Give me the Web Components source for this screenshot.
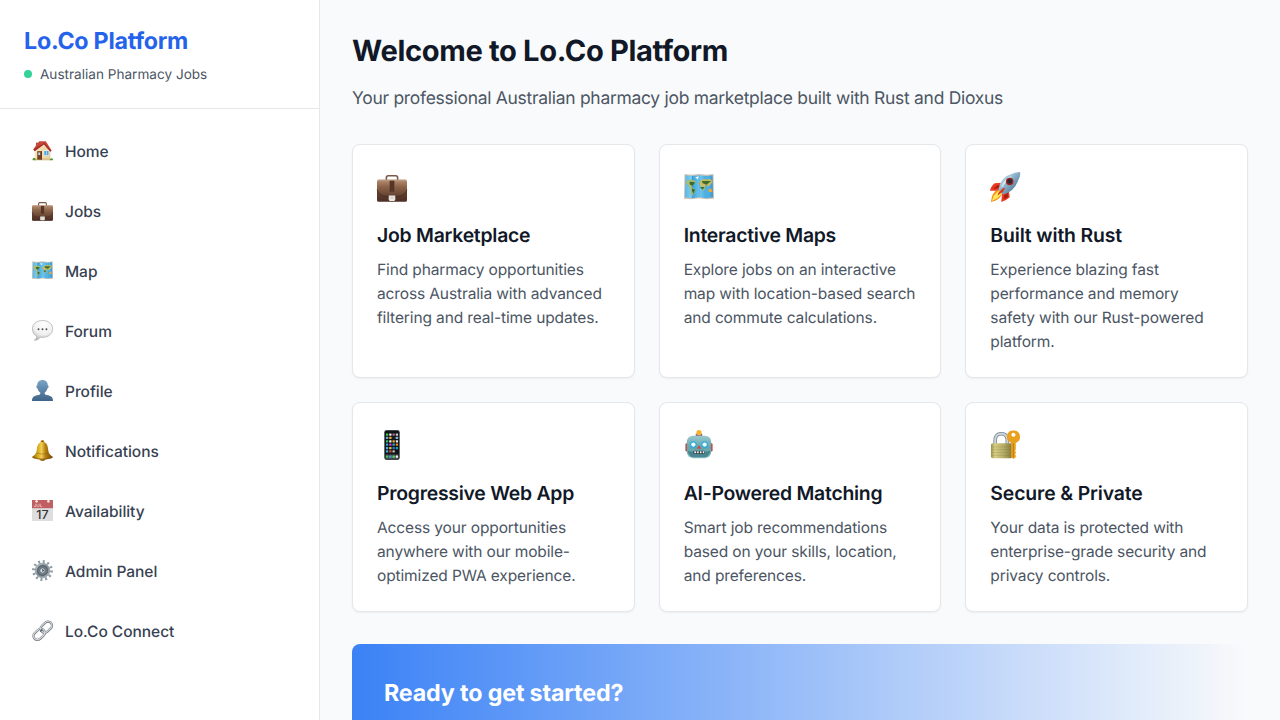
<!DOCTYPE html>
<html lang="en">
<head>
<meta charset="utf-8">
<title>Lo.Co Platform</title>
<style>
html,body{margin:0;height:100%;overflow:hidden;background:#f9fafb;font-family:Inter,"Liberation Sans",sans-serif;color:#111827;text-rendering:geometricPrecision}
</style>
</head>
<body>
<loco-app></loco-app>
<script>
const ICONS = {
home:`<defs><linearGradient id="w" x2="1"><stop stop-color="#f8e7bd"/><stop offset="1" stop-color="#e5cf9b"/></linearGradient></defs>
<path fill="#a9563f" d="M6 4h4v7H6z"/><path fill="url(#w)" d="M4 16 14 5l14 12v13H4z"/><path fill="#d8c08c" d="M4 28h24v3H4z"/>
<path fill="#c8473b" d="m2 14 9-12h10l9 14-2 2L18 7 4 17z"/><path fill="#8e1c18" d="m2 14 2 3L18 7l10 11 1-2L19 4z" opacity=".55"/>
<path fill="#7a3d20" d="M8 17h7v13H8z"/><path fill="#b8dcf0" d="M9.500 19h3v4h-3z"/><path fill="#54301d" d="M14 17h1v13h-1z"/>
<path fill="#fff" d="M18 16h8v8h-8z"/><path fill="#4fa3dc" d="M18.700 16.700h6.600v6.600h-6.600z"/><path fill="#d8efff" d="M21.600 17h1v6h-1z"/>
<path fill="#54972b" d="M1 31c-1-3 2-5 4-3l1 3zM27 31c0-3 4-5 5-1v1z"/>`,
briefcase:`<defs><linearGradient id="b" y2="1" x2="0"><stop stop-color="#b78f73"/><stop offset=".35" stop-color="#8a6148"/><stop offset="1" stop-color="#4b2e24"/></linearGradient></defs>
<path fill="none" stroke="#7a5949" stroke-width="1.700" d="M10 9V6q0-2 2-2h8q2 0 2 2v3"/>
<rect y="8" width="32" height="23.500" rx="2" fill="url(#b)"/><path fill="#4d2f24" opacity=".5" d="M0 20q3 7 10 7h12q7 0 10-7v10q0 2-2 2H2q-2 0-2-2z"/>
<path d="M0 19q3 7 10 7h12q7 0 10-7" fill="none" stroke="#3f251c" stroke-width=".8"/><path fill="#553526" d="M13.500 9h5v12h-5z"/><path fill="#cbb09a" d="M1 8.500h30v.8H1z" opacity=".6"/>
<path fill="#e9e6e1" d="M12.500 25h7v4.500l-1 1.500h-5l-1-1.500z"/><path fill="#c9c6c0" d="M14 27h4v1h-4z"/>`,
map:`<defs><linearGradient id="m" x2="1"><stop stop-color="#5cb5e5"/><stop offset=".24" stop-color="#7bcff3"/><stop offset=".25" stop-color="#3d9fd7"/><stop offset=".49" stop-color="#66c0ec"/><stop offset=".5" stop-color="#76ccf2"/><stop offset=".74" stop-color="#4aabdd"/><stop offset=".75" stop-color="#5cbce9"/><stop offset="1" stop-color="#3899d3"/></linearGradient></defs>
<path fill="#d0c2b4" d="m.500 2 7.500 1 8-1 8 1 7.500-1L32 28.500l-8 .5-8-1-8 1-8-.500z"/><path fill="url(#m)" d="m1.500 3.500 6.500.7 8-.8 8 .8 6.500-.7.500 23.500-7 1-8-1-8 1-7-1z"/>
<path fill="#a9bf72" d="m3 9 4-1 4 1 2 2-3 2-2 3 3 2 1 2-2 3-1 3-2-3v-4l-2-4-3-3z"/><path fill="#3d6a2b" d="m6 10.500 6 .500-3 4-3-2zm2.500 7 3.500 1.500-2 4-1.500-3z"/>
<path fill="#c7bd62" d="m15.500 12 3.500-4 9-.5 2.500 2.500-3 4.500-2.500 1-2-2-1 5-2 1.500-1.500-5-2-1z"/><path fill="#426b2c" d="m19 9.500 10 0-5 4-4-1.500zm-2 6.500 5 0-2 3z"/><path fill="#e7a83b" d="m26 18.500 3-1 1.500 3.500-4 .7z"/><path fill="#e5f6f8" d="m12 5.500 4-1-1.500 3.500z"/><path fill="#1b6e9b" opacity=".22" d="M8 4.200 9 4v23l-1 .5zm8-.8h1v23h-1zm8 .8 1-.2v23l-1 .5z"/>`,
rocket:`<defs><linearGradient id="r" x1="0" y1="0" x2="1" y2="1"><stop stop-color="#dff2fb"/><stop offset=".45" stop-color="#8db3ca"/><stop offset="1" stop-color="#2e5878"/></linearGradient></defs>
<path fill="#e9381f" d="M13 11.500 5 12q-4 3-5 8l10 0zM20 19l1 8q-3 3-9 5l1-10z"/><path fill="#a91c12" d="M12 14 8 14l-5 4 6-1zM19 22v5l-4 2v-4z"/>
<path fill="#f68a16" d="M9 19Q2 21 1 32q10-2 12-9z"/><path fill="#ffe85b" d="m9 20-5 5-2 6 6-3 5-5z"/>
<path fill="url(#r)" d="M9 19Q11 5 23 2q5-2 9-2 1 4-2 9-4 12-16 15z"/><path fill="#f5fdff" opacity=".7" d="M12 16Q15 7 24 3.500q-6 5-11 13z"/>
<circle cx="21" cy="10" r="4" fill="#9e2523"/><circle cx="21" cy="10" r="2.600" fill="#30292f"/><path fill="#d93920" d="M14 17 9 22l-1 3 6-4 2-4z"/>`,
bubble:`<defs><radialGradient id="c" cx=".55" cy=".2" r=".8"><stop stop-color="#fff"/><stop offset=".65" stop-color="#efefef"/><stop offset="1" stop-color="#b8b8b8"/></radialGradient></defs>
<path fill="url(#c)" stroke="#a8a8a8" stroke-width="1" d="M16 .7C7 .7.600 6 .600 13.500c0 6 3.400 9.200 6.400 11.100.2 3-1.500 5-3.500 6.200 4 .4 7-1.600 8.800-4.600l3.700.3c9 0 15.500-5.500 15.500-13S25 .700 16 .700z"/><circle cx="10" cy="14" r="1.450" fill="#4a4a4a"/><circle cx="16" cy="14" r="1.450" fill="#4a4a4a"/><circle cx="22" cy="14" r="1.450" fill="#4a4a4a"/>`,
person:`<defs><linearGradient id="p" x2="0" y2="1"><stop stop-color="#7ba4c6"/><stop offset="1" stop-color="#3e6488"/></linearGradient></defs><path fill="url(#p)" d="M16 0c-5 0-8 3.200-8 8-2 0-1.500 5 .7 5 .6 3 2 5.200 4.100 6.500-.1 2.500-1.200 3-3.300 3.500C3 24.300 0 26 0 32h32c0-6-3-7.700-9.500-9-2.100-.5-3.200-1-3.300-3.500 2.100-1.300 3.500-3.500 4.100-6.500 2.200 0 2.700-5 .7-5 0-4.800-3-8-8-8z"/>`,
bell:`<defs><linearGradient id="l" x2="1"><stop stop-color="#94650a"/><stop offset=".3" stop-color="#dcae26"/><stop offset=".45" stop-color="#efcf50"/><stop offset=".65" stop-color="#b57c0f"/><stop offset="1" stop-color="#6f4707"/></linearGradient></defs><circle cx="16" cy="3" r="3" fill="#bc8517"/><circle cx="16" cy="3" r="1.300" fill="#714809"/><ellipse cx="16" cy="28.500" rx="4.500" ry="3.200" fill="#7b4b05"/><path fill="url(#l)" d="M16 3C9 3 8 9 7.300 15 6.700 21 4.500 23 0 26c2 5 30 5 32 0-4.500-3-6.700-5-7.300-11C24 9 23 3 16 3z"/><path fill="#815204" opacity=".55" d="M2 25q14 6 28 0l2 1q-4 4-16 4T0 26z"/><path d="M7 20q9 3 18 0" fill="none" stroke="#8b5d07" opacity=".7"/>`,
calendar:`<path fill="#dedede" d="M0 0h32v32H0z"/><path fill="#bf5f61" d="M0 0h32v12.500H0z"/><circle cx="7" cy="2" r="2" fill="#f4e7e6"/><circle cx="25" cy="2" r="2" fill="#f4e7e6"/><text x="2.500" y="11" font-family="Inter,sans-serif" font-size="7" fill="#f3d9d9">JUL</text><text x="16" y="29" text-anchor="middle" font-family="Inter,sans-serif" font-size="19" letter-spacing="0" font-weight="500" fill="#353535">17</text>`,
gear:`<defs><linearGradient id="g" x2="1" y2="1"><stop stop-color="#c4cdd2"/><stop offset=".5" stop-color="#7b8790"/><stop offset="1" stop-color="#aab4ba"/></linearGradient></defs><circle cx="16" cy="16" r="13.700" fill="none" stroke="#8f9ba3" stroke-width="4.400" stroke-dasharray="3 4.173"/><circle cx="16" cy="16" r="11" fill="url(#g)" stroke="#98a3aa" stroke-width="1.500"/><circle cx="16" cy="16" r="7.500" fill="#75818a" stroke="#56616a" stroke-width="1.700"/><circle cx="16" cy="16" r="4" fill="#d8e0e3" stroke="#46515a" stroke-width="1"/><path fill="#4d5961" d="m15 13.500 4 2-3 3z"/>`,
link:`<g fill="none" stroke="#757d84" stroke-width="3.600"><rect x="12" y="5" width="19" height="12" rx="6" transform="rotate(-43 21.500 10.500)"/><rect x="1" y="16" width="19" height="12" rx="6" transform="rotate(-43 10.500 21.500)"/></g><g fill="none" stroke="#d9dee2" stroke-width="1.700"><rect x="12" y="4.700" width="19" height="12" rx="6" transform="rotate(-43 21.500 10.500)"/><rect x="1" y="15.700" width="19" height="12" rx="6" transform="rotate(-43 10.500 21.500)"/></g><path d="m12.500 17.500 3-3" stroke="#535b61" stroke-width="2"/>`,
phone:`<rect x="7.500" y="0" width="17" height="32" rx="2.600" fill="#777d80"/><rect x="8.300" y=".5" width="15.400" height="31" rx="2" fill="#111416"/>
${[['#45c94f','#eee','#b467a0','#c7cbc6'],['#68a9da','#e9a633','#222','#83b6df'],['#34bd62','#eee','#e5ad30','#e7e7e7'],['#28a6d5','#d637c5','#3ba4d8','#e88c24'],['#57a8e8','#dfc440','#2f71d0','#26a3ad'],['#43b5db','#d94a3a','#b8bec0','#111416']].map((r,j)=>r.map((c,i)=>`<rect x="${9.500+i*3.500}" y="${3.600+j*3.600}" width="2.500" height="2.500" rx=".4" fill="${c}"/>`).join('')).join('')}
<path fill="#43494d" d="M9 26h14v5H9z"/>${['#45c94f','#48a5e4','#62d265','#eee'].map((c,i)=>`<rect x="${9.500+i*3.500}" y="27.200" width="2.500" height="2.500" rx=".4" fill="${c}"/>`).join('')}`,
robot:`<defs><linearGradient id="o" y2="1" x2="0"><stop stop-color="#9ac8ce"/><stop offset=".55" stop-color="#5fa5af"/><stop offset="1" stop-color="#8cc0c6"/></linearGradient></defs><path fill="#7f6395" d="M12.500 4h7v4h-7z"/><circle cx="16" cy="2.800" r="2.800" fill="#f5b32c"/><rect x="1.500" y="14" width="4" height="9" rx="1.500" fill="#c8403a"/><rect x="26.500" y="14" width="4" height="9" rx="1.500" fill="#c8403a"/><rect x="3" y="6" width="26" height="24" rx="6.500" fill="url(#o)"/><path fill="#38757f" opacity=".75" d="M4 22q12 3 24 0-1 7-7 7H11q-6 0-7-7z"/><circle cx="10" cy="15.500" r="3.600" fill="#34a8d6"/><circle cx="22" cy="15.500" r="3.600" fill="#34a8d6"/><circle cx="10" cy="15.500" r="2.300" fill="#e9fcff"/><circle cx="22" cy="15.500" r="2.300" fill="#e9fcff"/><path fill="#d24b40" d="m16 16 2.500 4h-5z"/><rect x="10" y="22" width="12" height="3.500" rx="1" fill="#2b4146"/><path fill="#eee" d="M11 22.700h2v2h-2zm3 0h1.700v2H14zm3 0h1.700v2H17zm3 0h1.500v2H20z"/>`,
lock:`<defs><linearGradient id="k" x2="1"><stop stop-color="#99914b"/><stop offset=".18" stop-color="#d8ce87"/><stop offset=".55" stop-color="#b8b06a"/><stop offset="1" stop-color="#827a3d"/></linearGradient></defs><path fill="none" stroke="#79838d" stroke-width="3.800" d="M5.500 16V11q0-7 6.500-7t6.500 7v5"/><path fill="none" stroke="#ccd5dd" stroke-width="2.200" d="M5.500 16V11q0-7 6.500-7t6.500 7v5"/><rect x="1" y="14" width="23" height="16" rx="2" fill="url(#k)"/><path stroke="#756d30" opacity=".22" d="M2 18h21M2 21h21M2 24h21M2 27h21"/><path fill="#e9a01f" d="M25 .500a6.800 6.800 0 0 0-2.500 13.200V29l2.500 2 2.500-2v-2l-1-1 1-1v-2l-1-1 1-1v-7.300A6.800 6.800 0 0 0 25 .500z"/><circle cx="25" cy="5" r="2.200" fill="#fffdf6"/><path fill="#bd7a0c" d="M24.300 14h1v15h-1z"/>`
};
const make=(tag,css,html)=>customElements.define(tag,class extends HTMLElement{constructor(){super();this.attachShadow({mode:'open'}).innerHTML=`<style>*{box-sizing:border-box;margin:0}${css}</style>${typeof html==='function'?html(this):html}`}});

make('emoji-icon',':host{display:block;width:var(--icon,21px);height:var(--icon,21px);flex:none}svg{display:block;width:100%;height:100%;overflow:visible}',el=>`<svg viewBox="0 0 32 32" aria-hidden="true">${ICONS[el.getAttribute('name')]}</svg>`);
make('nav-item',':host{display:flex;align-items:center;gap:12px;height:52px;padding:0 16px;font-size:15.520px;letter-spacing:-.04px;font-weight:500;line-height:24px;color:#374151;white-space:nowrap}emoji-icon{margin-bottom:1px}span{padding-top:2px}',el=>`<emoji-icon name="${el.getAttribute('icon')}"></emoji-icon><span><slot></slot></span>`);
make('side-bar',`:host{display:block;background:#fff;border-right:1px solid #e5e7eb}header{padding:24px;border-bottom:1px solid #e5e7eb}h1{font-size:23.280px;letter-spacing:-.26px;line-height:30px;padding-top:2px;font-weight:700;color:#2563eb;white-space:nowrap}.s{display:flex;align-items:center;gap:8px;margin-top:8px;height:20px;font-size:13.580px;line-height:20px;color:#4b5563;white-space:nowrap}.s span{padding-top:2px}i{width:8px;height:8px;border-radius:50%;background:#34d399}nav{display:flex;flex-direction:column;gap:8px;padding:16px}`,
`<header><h1><span>Lo.Co Platform</span></h1><div class="s"><i></i><span>Australian Pharmacy Jobs</span></div></header><nav><slot></slot></nav>`);
make('feature-card',`:host{display:block;background:#fff;border:1px solid #e5e7eb;border-radius:8px;padding:24px;box-shadow:0 1px 2px rgba(0,0,0,.05);box-sizing:border-box}.i{height:36px;padding-top:3px;--icon:30px;margin-bottom:16px}h3{font-size:19.400px;letter-spacing:var(--tracking,-.25px);line-height:28px;font-weight:600;color:#111827;margin-bottom:8px;white-space:nowrap}p{font-size:15.520px;letter-spacing:-.13px;line-height:24px;padding-top:1px;margin-bottom:-1px;color:#4b5563;white-space:nowrap}`,
el=>`<div class="i"><emoji-icon name="${el.getAttribute('icon')}"></emoji-icon></div><h3><span>${el.getAttribute('heading')}</span></h3><p><slot></slot></p>`);
make('cta-banner',`:host{display:block;border-radius:8px;padding:32px;min-height:180px;background:linear-gradient(to right,#3b82f6,transparent);color:#fff}h2{font-size:23.280px;letter-spacing:-.16px;line-height:30px;padding-top:2px;font-weight:700}`,`<h2><span><slot></slot></span></h2>`);
make('loco-app',`:host{display:grid;grid-template-columns:320px 1fr;height:100vh;overflow:hidden}main{padding:32px;min-width:0}h1{font-size:29.100px;letter-spacing:-.34px;line-height:36px;padding-top:2px;font-weight:700;margin-bottom:14px}.sub{font-size:17.460px;letter-spacing:-.265px;line-height:28px;padding-top:1px;color:#4b5563;margin-bottom:31px}.grid{display:grid;grid-template-columns:repeat(3,minmax(0,1fr));gap:24px;margin-bottom:32px}.loose{--tracking:-.14px}`,
`<side-bar><nav-item icon="home">Home</nav-item><nav-item icon="briefcase">Jobs</nav-item><nav-item icon="map">Map</nav-item><nav-item icon="bubble">Forum</nav-item><nav-item icon="person">Profile</nav-item><nav-item icon="bell">Notifications</nav-item><nav-item icon="calendar">Availability</nav-item><nav-item icon="gear">Admin Panel</nav-item><nav-item icon="link">Lo.Co Connect</nav-item></side-bar>
<main><h1><span>Welcome to Lo.Co Platform</span></h1><p class="sub"><span>Your professional Australian pharmacy job marketplace built with Rust and Dioxus</span></p><div class="grid">
<feature-card icon="briefcase" heading="Job Marketplace">Find pharmacy opportunities<br>across Australia with advanced<br>filtering and real-time updates.</feature-card>
<feature-card icon="map" heading="Interactive Maps">Explore jobs on an interactive<br>map with location-based search<br>and commute calculations.</feature-card>
<feature-card class="loose" icon="rocket" heading="Built with Rust">Experience blazing fast<br>performance and memory<br>safety with our Rust-powered<br>platform.</feature-card>
<feature-card icon="phone" heading="Progressive Web App">Access your opportunities<br>anywhere with our mobile-<br>optimized PWA experience.</feature-card>
<feature-card icon="robot" heading="AI-Powered Matching">Smart job recommendations<br>based on your skills, location,<br>and preferences.</feature-card>
<feature-card class="loose" icon="lock" heading="Secure &amp; Private">Your data is protected with<br>enterprise-grade security and<br>privacy controls.</feature-card>
</div><cta-banner>Ready to get started?</cta-banner></main>`);
</script>
</body>
</html>
